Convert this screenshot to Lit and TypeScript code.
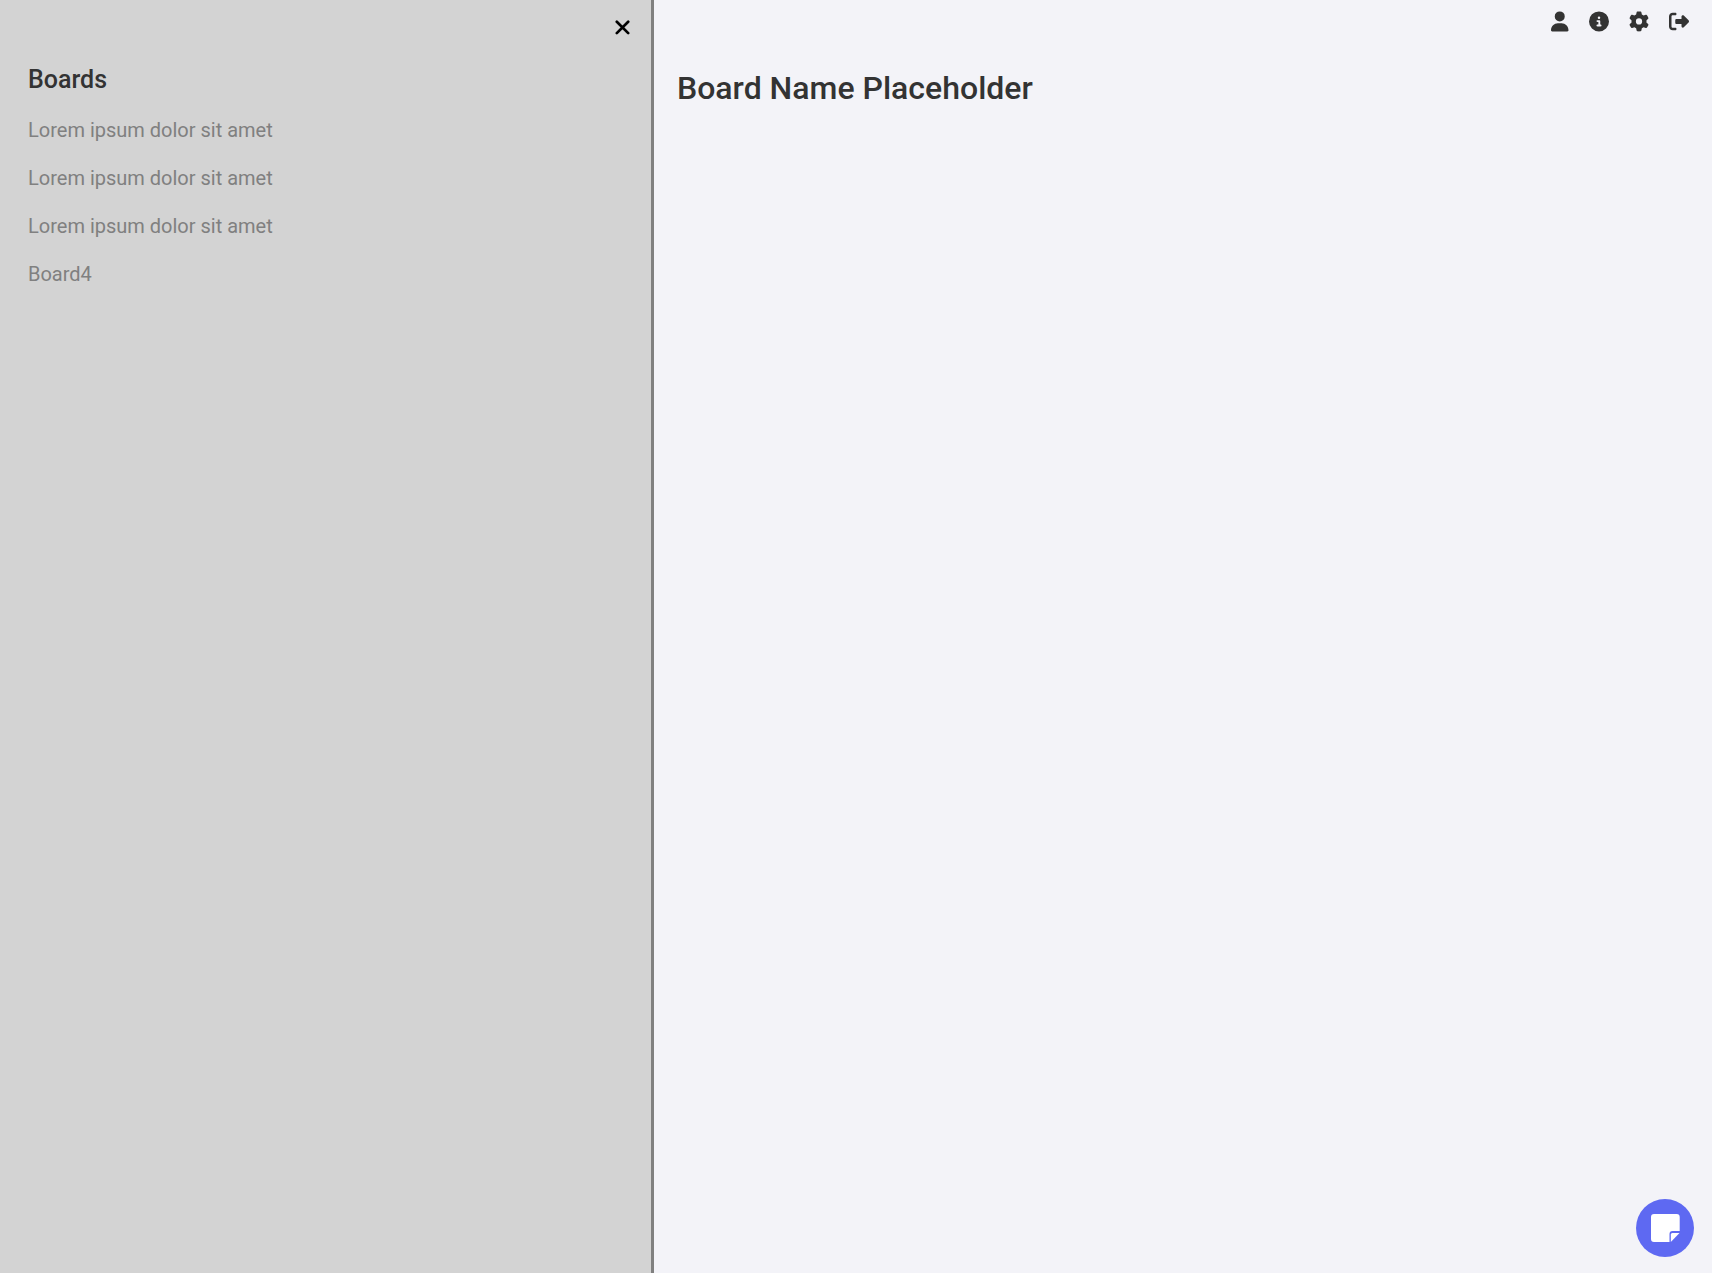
import { LitElement, html, css, svg } from "lit";
import { customElement, state } from "lit/decorators.js";

const icons = {
  user: { box: "0 0 448 512", shape: svg`<path d="M224 256A128 128 0 1 0 224 0a128 128 0 1 0 0 256zm-45.700 48C79.800 304 0 383.800 0 482.300 0 498.700 13.300 512 29.700 512H418.300c16.400 0 29.700-13.300 29.700-29.700C448 383.800 368.200 304 269.700 304H178.300z"/>` },
  info: { box: "0 0 512 512", shape: svg`<path d="M256 512A256 256 0 1 0 256 0a256 256 0 1 0 0 512zM216 336h24V272H216c-13.300 0-24-10.700-24-24s10.700-24 24-24h48c13.300 0 24 10.700 24 24v88h8c13.300 0 24 10.700 24 24s-10.700 24-24 24H216c-13.300 0-24-10.700-24-24s10.700-24 24-24zm40-208a32 32 0 1 1 0 64 32 32 0 1 1 0-64z"/>` },
  gear: { box: "0 0 512 512", shape: svg`<path d="M495.900 166.600c3.200 8.700 .5 18.400-6.400 24.600l-43.300 39.400c1.100 8.300 1.700 16.800 1.700 25.400s-.6 17.100-1.700 25.400l43.300 39.400c6.900 6.200 9.600 15.900 6.400 24.600c-4.400 11.900-9.700 23.300-15.800 34.300l-4.700 8.100c-6.600 11-14 21.400-22.100 31.200c-5.900 7.200-15.700 9.600-24.500 6.800l-55.700-17.700c-13.400 10.300-28.200 18.900-44 25.400l-12.500 57.100c-2 9.100-9 16.300-18.200 17.800c-13.800 2.300-28 3.500-42.500 3.500s-28.700-1.200-42.500-3.500c-9.200-1.500-16.200-8.700-18.200-17.800l-12.500-57.100c-15.800-6.500-30.600-15.100-44-25.400L83.100 425.900c-8.800 2.800-18.600 .3-24.500-6.800c-8.100-9.800-15.500-20.200-22.100-31.200l-4.700-8.100c-6.100-11-11.400-22.400-15.800-34.300c-3.200-8.700-.5-18.400 6.400-24.600l43.300-39.400C64.600 273.100 64 264.600 64 256s.6-17.100 1.700-25.400L22.400 191.200c-6.900-6.200-9.600-15.900-6.400-24.600c4.400-11.900 9.700-23.300 15.800-34.300l4.700-8.100c6.600-11 14-21.400 22.100-31.200c5.900-7.200 15.700-9.600 24.500-6.800l55.700 17.700c13.400-10.300 28.200-18.900 44-25.400l12.500-57.100c2-9.100 9-16.300 18.200-17.800C227.300 1.200 241.500 0 256 0s28.700 1.200 42.500 3.500c9.200 1.500 16.200 8.700 18.200 17.800l12.500 57.100c15.800 6.500 30.600 15.100 44 25.400l55.700-17.700c8.800-2.800 18.600-.3 24.500 6.800c8.100 9.800 15.500 20.200 22.100 31.200l4.700 8.100c6.100 11 11.400 22.400 15.800 34.300zM256 336a80 80 0 1 0 0-160 80 80 0 1 0 0 160z"/>` },
  leave: { box: "0 0 512 512", shape: svg`<path d="M377.900 105.900L500.700 228.700c7.200 7.200 11.300 17.100 11.300 27.300s-4.100 20.100-11.300 27.300L377.900 406.100c-6.400 6.400-15 9.900-24 9.900c-18.700 0-33.900-15.200-33.900-33.900l0-62.100-128 0c-17.700 0-32-14.300-32-32l0-64c0-17.700 14.300-32 32-32l128 0 0-62.100c0-18.700 15.200-33.900 33.900-33.900c9 0 17.600 3.600 24 9.900zM160 96L96 96c-17.700 0-32 14.300-32 32l0 256c0 17.700 14.300 32 32 32l64 0c17.700 0 32 14.300 32 32s-14.300 32-32 32l-64 0c-53 0-96-43-96-96L0 128C0 75 43 32 96 32l64 0c17.700 0 32 14.300 32 32s-14.300 32-32 32z"/>` },
};

@customElement("app-root")
export class AppRoot extends LitElement {
  static styles = css`
    :host { display: block; font-family: Roboto, sans-serif; color: #333; }
    .app { display: flex; height: 100vh; overflow: hidden; background: #f3f3f8; }
    .sidebar { box-sizing: border-box; width: 654px; flex: none; border-right: 3px solid gray; background: #d3d3d3; padding: 14px 20px 0 28px; display: flex; flex-direction: column; }
    button { border: 0; padding: 0; background: none; color: inherit; font: inherit; cursor: pointer; display: flex; align-items: center; justify-content: center; }
    .close { align-self: flex-end; width: 18px; height: 26px; color: #000; }
    .close svg { width: 16px; height: 16px; }
    h1, h2, ul { margin: 0; padding: 0; font-weight: 500; }
    h2 { font-size: 25px; line-height: 30px; margin-top: 25px; }
    ul { list-style: none; margin-top: 23px; display: flex; flex-direction: column; gap: 24px; font-size: 20px; line-height: 24px; font-weight: 400; color: gray; }
    .main { flex: 1; display: flex; flex-direction: column; padding: 11px 18px 16px 23px; }
    .tools { display: flex; justify-content: flex-end; gap: 20px; padding-right: 5px; }
    .tools button { width: 20px; height: 20px; }
    .tools svg { height: 20px; display: block; fill: #333; overflow: visible; }
    .tools path { transform: translateY(10px); }
    .tools .user { justify-content: flex-end; padding-right: 1px; box-sizing: border-box; }
    h1 { font-size: 32px; line-height: 38px; margin-top: 38px; }
    .add { margin-top: auto; align-self: flex-end; width: 58px; height: 58px; border-radius: 50%; background: #5e69f2; }
    .add svg { width: 30px; height: 30px; }
  `;
  @state() boards = ["Lorem ipsum dolor sit amet", "Lorem ipsum dolor sit amet", "Lorem ipsum dolor sit amet", "Board4"];

  render() {
    return html`<div class="app">
      <aside class="sidebar">
        <button class="close"><svg viewBox="0 0 16 16" fill="none" stroke="currentColor" stroke-width="2.7" stroke-linecap="round"><path d="M2.800 2.700L14.200 14.100M14.200 2.700L2.800 14.100"/></svg></button>
        <h2>Boards</h2>
        <ul>${this.boards.map((b) => html`<li>${b}</li>`)}</ul>
      </aside>
      <main class="main">
        <nav class="tools">${Object.entries(icons).map(([name, i]) => html`<button class=${name}><svg viewBox=${i.box}>${i.shape}</svg></button>`)}</nav>
        <h1>Board Name Placeholder</h1>
        <button class="add"><svg viewBox="0 0 30 30" fill="#fff"><path d="M4 1H26.700a3 3 0 0 1 3 3V18H22.500a3 3 0 0 0-3 3V29H4a3 3 0 0 1-3-3V4a3 3 0 0 1 3-3z"/><path d="M22.300 20H29.500L20.800 29V21.500A1.500 1.500 0 0 1 22.300 20z"/></svg></button>
      </main>
    </div>`;
  }
}
